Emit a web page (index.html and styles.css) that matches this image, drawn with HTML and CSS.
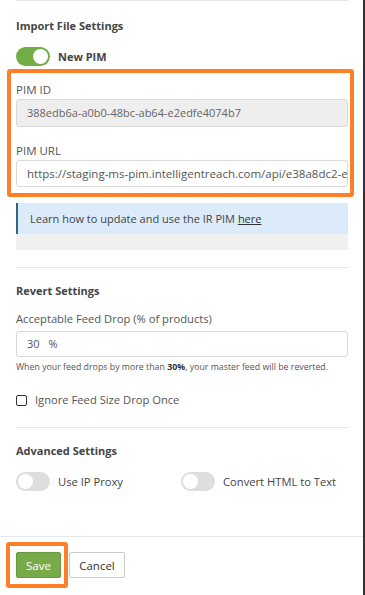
FILE: index.html
```html
<!DOCTYPE html>
<html lang="en">
<head>
  <meta charset="UTF-8">
  <meta name="viewport" content="width=device-width, initial-scale=1.0">
  <title>Import File Settings</title>
  <link rel="stylesheet" href="styles.css">
</head>
<body>
  <div class="panel">
    <div class="panel-body">
      <div class="divider top"></div>

      <!-- Import settings -->
      <section class="group first">
        <h3>Import File Settings</h3>
        <label class="switch-row">
          <span class="switch on"></span>
          <span class="switch-label bold">New PIM</span>
        </label>

        <div class="highlight">
          <div class="field">
            <label>PIM ID</label>
            <div class="input readonly">388edb6a-a0b0-48bc-ab64-e2edfe4074b7</div>
          </div>
          <div class="field">
            <label>PIM URL</label>
            <div class="input url">https://staging-ms-pim.intelligentreach.com/api/e38a8dc2-e9f1-4a62</div>
          </div>
        </div>

        <div class="info">
          <div class="info-text">Learn how to update and use the IR PIM <a href="#">here</a></div>
          <div class="info-foot"></div>
        </div>
      </section>

      <div class="divider"></div>

      <!-- Revert -->
      <section class="group revert">
        <h3>Revert Settings</h3>
        <div class="field feed-drop">
          <label>Acceptable Feed Drop (% of products)</label>
          <div class="input"><span class="num">30</span>%</div>
          <p class="hint">When your feed drops by more than <b>30%</b>, your master feed will be reverted.</p>
        </div>
        <label class="check-row">
          <span class="checkbox"></span>
          Ignore Feed Size Drop Once
        </label>
      </section>

      <div class="divider"></div>

      <!-- Advanced -->
      <section class="group">
        <h3>Advanced Settings</h3>
        <div class="switch-grid">
          <label class="switch-row">
            <span class="switch"></span>
            <span class="switch-label">Use IP Proxy</span>
          </label>
          <label class="switch-row">
            <span class="switch"></span>
            <span class="switch-label">Convert HTML to Text</span>
          </label>
        </div>
      </section>
    </div>

    <footer class="panel-footer">
      <span class="save-mark"><button class="btn btn-save" type="button">Save</button></span>
      <button class="btn btn-cancel" type="button">Cancel</button>
    </footer>
  </div>
</body>
</html>
```

FILE: styles.css
```css
:root {
  --text: #444;
  --muted: #555;
  --line: #e6e6e6;
  --border: #d9d9d9;
  --green: #72ae45;
  --orange: #ff7f27;
  --font: 'Open Sans', 'Liberation Sans', sans-serif;
}
* {
  box-sizing: border-box;
  margin: 0;
  padding: 0;
}
body {
  font-family: var(--font);
  font-size: 11px;
  color: var(--text);
  background: #fff;
  width: 365px;
  height: 595px;
  overflow: hidden;
}
/* Панель */
.panel {
  width: 365px;
  height: 595px;
  border-right: 2px solid #333;
  display: flex;
  flex-direction: column;
}
.panel-body {
  height: 536px;
  padding: 0 15px 0 16px;
}
.divider {
  height: 1px;
  background: var(--line);
}
.group {
  padding: 14px 0 17px;
}
.group.first {
  padding-top: 16px;
}
.group.revert {
  padding-bottom: 18px;
}
h3 {
  font-size: 11px;
  font-weight: 700;
  color: #444;
  line-height: 18px;
}
/* Переключатели */
.switch-row {
  display: flex;
  align-items: center;
  gap: 8px;
}
.group > .switch-row {
  margin-top: 12px;
}
.switch {
  position: relative;
  width: 34px;
  height: 19px;
  border-radius: 10px;
  background: #dedede;
  flex-shrink: 0;
}
.switch::after {
  content: '';
  position: absolute;
  top: 2px;
  left: 2px;
  width: 15px;
  height: 15px;
  border-radius: 50%;
  background: #fff;
}
.switch.on {
  background: var(--green);
}
.switch.on::after {
  left: 17px;
}
.switch-label {
  font-size: 11.2px;
  color: #444;
  line-height: 18px;
}
.switch-label.bold {
  font-size: 11px;
  font-weight: 700;
}
.switch-grid {
  display: grid;
  grid-template-columns: 165px 1fr;
  margin-top: 12px;
}
/* Поля */
.field label {
  display: block;
  color: var(--muted);
  font-size: 11.5px;
  line-height: 18px;
}
.input {
  height: 28px;
  border: 1px solid var(--border);
  border-radius: 3px;
  padding: 0 10px;
  line-height: 26px;
  color: #555;
  white-space: nowrap;
  overflow: hidden;
}
.input.readonly {
  background: #eee;
  color: #666;
}
.input.url {
  font-size: 11.5px;
}
.num {
  margin-right: 9px;
}
.highlight {
  margin: 3px -6px 0 -9px;
  padding: 8px 2px 6px 5px;
  border: 4px solid var(--orange);
  border-radius: 3px;
}
.highlight .field + .field {
  margin-top: 15px;
}
.highlight .field + .field .input {
  height: 27px;
  line-height: 25px;
}
.feed-drop {
  margin-top: 10px;
}
.feed-drop label {
  font-size: 11.2px;
  margin-bottom: 3px;
}
.feed-drop .input {
  height: 26px;
  line-height: 24px;
}
.hint {
  font-size: 8.8px;
  line-height: 12px;
  color: #555;
  margin-top: 4px;
}
.hint b {
  color: #333;
}
/* Инфо-блок */
.info {
  margin-top: 6px;
}
.info-text {
  background: #dcebfa;
  border-left: 2px solid #2f6783;
  padding: 0 0 0 12px;
  line-height: 31px;
  color: #444;
}
.info-text a {
  color: #333;
}
.info-foot {
  height: 16px;
  background: #f0f0f0;
}
/* Чекбокс */
.check-row {
  display: flex;
  align-items: center;
  gap: 8px;
  margin-top: 18px;
  line-height: 18px;
  font-size: 11.2px;
  color: #555;
}
.checkbox {
  width: 11px;
  height: 11px;
  border: 1px solid #333;
  border-radius: 2px;
}
/* Футер */
.panel-footer {
  flex: 1;
  border-top: 1px solid var(--line);
  padding: 5px 0 0 6px;
  display: flex;
  align-items: flex-start;
}
.save-mark {
  display: inline-block;
  border: 4px solid var(--orange);
  border-radius: 3px;
  padding: 6px 3px 6px 6px;
}
.btn {
  font-family: var(--font);
  font-size: 11.5px;
  height: 26px;
  border-radius: 2px;
  cursor: pointer;
  display: block;
}
.btn-save {
  width: 45px;
  background: #79aa4a;
  border: 1px solid #6a9a3e;
  color: #fff;
}
.btn-cancel {
  width: 56px;
  margin: 10px 0 0 1px;
  background: #fff;
  border: 1px solid #ccc;
  color: #333;
}
```
